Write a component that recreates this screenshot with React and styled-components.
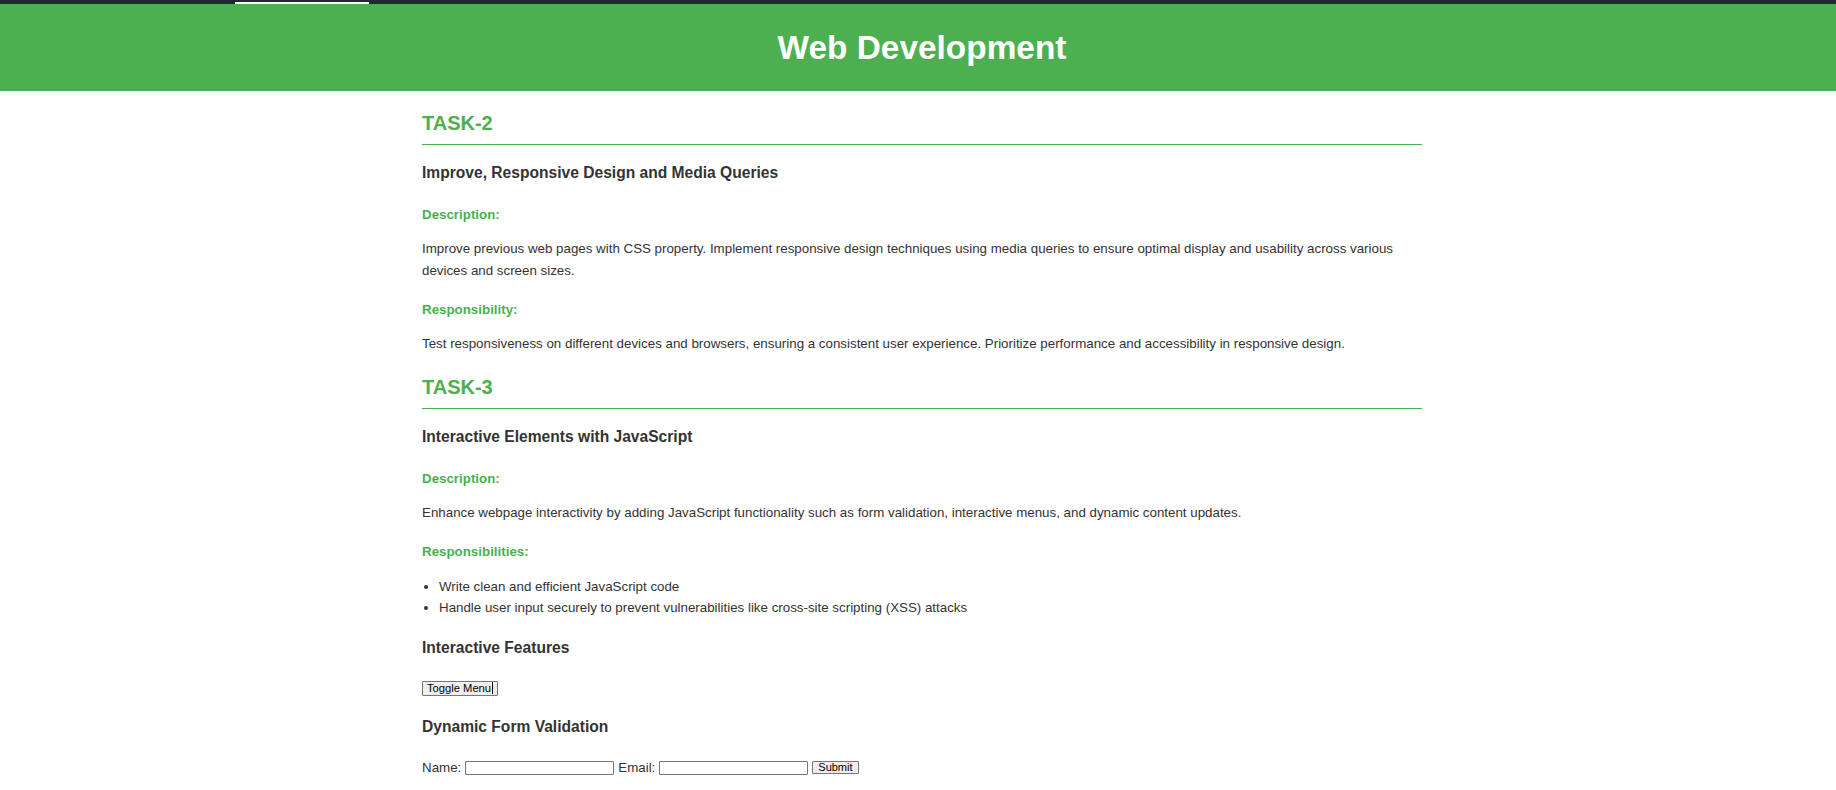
import React from "react";
import styled, { createGlobalStyle } from "styled-components";

const GlobalStyle = createGlobalStyle`
  html, body {
    margin: 0;
    padding: 0;
    background: #ffffff;
  }

  body {
    font-family: "Liberation Sans", Arial, Helvetica, sans-serif;
    color: #333333;
    font-size: 13.33px;
  }
`;

const TopStrip = styled.div`
  height: 4px;
  background: #24272b;
  display: flex;
  align-items: flex-end;
`;

const StripMark = styled.span`
  display: block;
  margin-left: 235px;
  width: 134px;
  height: 2px;
  background: #ffffff;
`;

const Header = styled.header`
  background-color: #4caf50;
  padding: 24px 0 23px 8px;
  text-align: center;
`;

const Title = styled.h1`
  margin: 0;
  color: #ffffff;
  font-size: 33.4px;
  line-height: 40px;
  font-weight: 700;
`;

const Main = styled.main`
  max-width: 1000px;
  margin: 0 auto;
  padding: 0 0 0 8px;
`;

const TaskTitle = styled.h2`
  margin: 21px 0 0;
  padding-bottom: 10px;
  border-bottom: 1px solid #4caf50;
  color: #4caf50;
  font-size: 20px;
  line-height: 22px;
  font-weight: 700;
`;

const SubTitle = styled.h3`
  margin: ${(p) => (p.$first ? "18px" : "19px")} 0 23px;
  color: #333333;
  font-size: 15.6px;
  line-height: 20px;
  font-weight: 700;
`;

const Label = styled.h4`
  margin: 18px 0 14px;
  color: #4caf50;
  font-size: 13.33px;
  line-height: 18px;
  font-weight: 700;
`;

const Text = styled.p`
  margin: 14px 0;
  font-size: 13.33px;
  line-height: 22.4px;
`;

const List = styled.ul`
  margin: 15px 0 20px;
  padding-left: 17px;
  font-size: 13.33px;
  line-height: 21px;
`;

const ButtonRow = styled.div`
  margin: 0 0 21px;
  display: flex;
`;

const PlainButton = styled.button`
  font-family: "Liberation Sans", Arial, sans-serif;
  font-size: ${(p) => (p.$small ? "11px" : "11.2px")};
  line-height: 11px;
  color: #000000;
  background: #efefef;
  border: 1px solid #767676;
  border-radius: 1px;
  padding: ${(p) => (p.$small ? "0 5px" : "1px 4px")};
  height: ${(p) => (p.$small ? "13px" : "15px")};
  display: inline-flex;
  align-items: center;
`;

const Caret = styled.span`
  display: inline-block;
  width: 1px;
  height: 12px;
  background: #000000;
  margin-left: 1px;
`;

const Form = styled.form`
  display: flex;
  align-items: center;
  gap: 4px;
  font-size: 13.33px;
  line-height: 16px;
  color: #333333;
`;

const Field = styled.input`
  box-sizing: border-box;
  width: 149px;
  height: 14px;
  border: 1px solid #767676;
  border-radius: 1px;
  padding: 0 2px;
  font-size: 10px;
  margin: 0;
`;

const tasks = [
  {
    id: "TASK-2",
    title: "Improve, Responsive Design and Media Queries",
    description:
      "Improve previous web pages with CSS property. Implement responsive design techniques using media queries to ensure optimal display and usability across various devices and screen sizes.",
    respLabel: "Responsibility:",
    resp:
      "Test responsiveness on different devices and browsers, ensuring a consistent user experience. Prioritize performance and accessibility in responsive design.",
  },
];

export default function App() {
  return (
    <>
      <GlobalStyle />
      <TopStrip>
        <StripMark />
      </TopStrip>
      <Header>
        <Title>Web Development</Title>
      </Header>
      <Main>
        {tasks.map((t) => (
          <section key={t.id}>
            <TaskTitle>{t.id}</TaskTitle>
            <SubTitle $first>{t.title}</SubTitle>
            <Label>Description:</Label>
            <Text>{t.description}</Text>
            <Label>{t.respLabel}</Label>
            <Text>{t.resp}</Text>
          </section>
        ))}

        <section>
          <TaskTitle>TASK-3</TaskTitle>
          <SubTitle $first>Interactive Elements with JavaScript</SubTitle>
          <Label>Description:</Label>
          <Text>
            Enhance webpage interactivity by adding JavaScript functionality such as form validation,
            interactive menus, and dynamic content updates.
          </Text>
          <Label>Responsibilities:</Label>
          <List>
            <li>Write clean and efficient JavaScript code</li>
            <li>Handle user input securely to prevent vulnerabilities like cross-site scripting (XSS) attacks</li>
          </List>

          <SubTitle>Interactive Features</SubTitle>
          <ButtonRow>
            <PlainButton type="button">
              Toggle Menu<Caret />
            </PlainButton>
          </ButtonRow>

          <SubTitle>Dynamic Form Validation</SubTitle>
          <Form onSubmit={(e) => e.preventDefault()}>
            <label htmlFor="name">Name:</label>
            <Field id="name" type="text" />
            <label htmlFor="email">Email:</label>
            <Field id="email" type="email" />
            <PlainButton $small type="submit">Submit</PlainButton>
          </Form>
        </section>
      </Main>
    </>
  );
}
